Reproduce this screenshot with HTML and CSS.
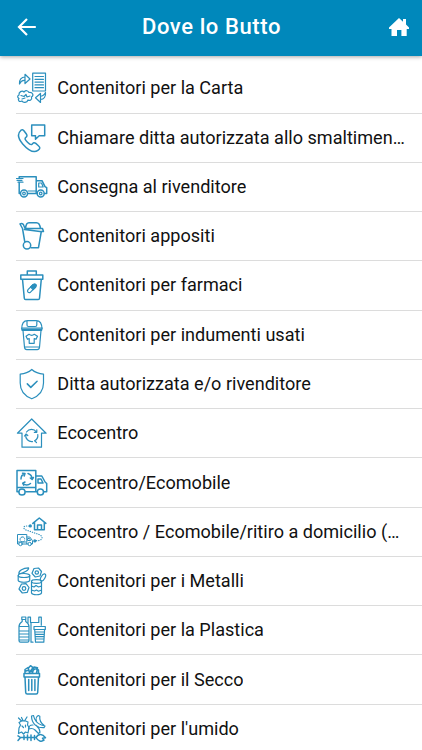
FILE: index.html
```html
<!DOCTYPE html>
<html lang="it">
<head>
<meta charset="utf-8">
<meta name="viewport" content="width=device-width, initial-scale=1">
<title>Dove lo Butto</title>
<link rel="stylesheet" href="styles.css">
</head>
<body>
<header class="bar">
  <svg class="back" viewBox="0 0 20 20"><path d="M18.800 10H2M10 2L2 10l8 8"/></svg>
  <h1 class="title">Dove lo Butto</h1>
  <svg class="home" viewBox="0 0 20 20"><path d="M10 1l4 3.800V2h3v5.600l3 2.900V12h-2.300v7h-5.300v-6H8v6H2.500v-7H0v-1.500z"/></svg>
</header>
<ul class="list">
  <li class="row">
    <svg class="icon" viewBox="0 0 32 32"><path d="M16.700 1.200h12.800v17.800H16.700zM19 4.500h8.500M19 7.300h8.500M19 10.100h8.500M19 12.900h8.500M19 15.700h8.500"/><path d="M3.500 12C3 7.500 5.500 5 9 5V2.300L14 7l-5 4.500V8.500C6.500 8 4.700 9.500 3.500 12zM9 5v3.500M29.500 20.500c.5 4-1.500 7-5 7v3l-5-4.700 5-4.300v2.700c2 0 3.700-1.200 5-3.700zM24.500 24v3.500"/><path d="M3 23c-.5-3 3-5 5-3 2-2 4-1.500 5 .5 4-.5 5 3 2.500 4.500 1 3-2 4-3.500 3-1 3-5 3-6 1-3 1.500-4.500-1-3-2.500-2-1-1.500-3 0-3.500zM5 23.500l3 1 2-2 1 2.500 3-1M6 27l3-1"/></svg>
    <span class="label">Contenitori per la Carta</span>
  </li>
  <li class="row">
    <svg class="icon" viewBox="0 0 32 32"><path class="bold" d="M15.700 3h13v10.800h-5.500l-3.700 3.400v-3.400h-3.800z"/><path class="bold" d="M5 8.200c-4 3.500-3 8.300 1.700 13.700 5.700 6.500 11 9.500 15.200 6.500 2.500-1.800 2.500-3 .5-4.700l-2.600-2.300c-1.600-1.300-2.700-.8-3.800.9-1 .9-2.500 0-4.500-2-2.300-2.400-3-3.700-1.800-4.800 1.500-1 1.600-2.200.5-3.700L7.900 8.700C7 7.500 6 7.400 5 8.200z"/></svg>
    <span class="label">Chiamare ditta autorizzata allo smaltimento</span>
  </li>
  <li class="row">
    <svg class="icon" viewBox="0 0 32 32"><path class="bold" d="M4.300 22.500H3.200V11.500M3.200 7V5.700h17v16.800h-8.600M20.200 9.700H26l3 6 1.700 1v5.800h-2.300M20.200 22.500h1"/><path d="M22.700 12h2.800l1.700 4h-4.500zM12 20h8M0.500 7.500h6.500M1 9.300h5M2 11.200h5"/><circle class="bold" cx="8" cy="22.500" r="3.500"/><circle class="bold" cx="24.700" cy="22.500" r="3.500"/><circle cx="8" cy="22.500" r="1.300"/><circle cx="24.700" cy="22.500" r="1.300"/></svg>
    <span class="label">Consegna al rivenditore</span>
  </li>
  <li class="row">
    <svg class="icon" viewBox="0 0 32 32"><path class="bold" d="M6.500 8.500L4 4q1.700-1 3.300.3L9 8.500h17.500l1 3H24L8.500 9.500M9.500 8.500C9.800 5 11 2.700 13 2.700h7.500c2 0 3.500 2.300 4 5.800M6.500 8.500L8.800 22M25.300 11.500L22.500 27.700H15"/><circle class="bold" cx="11" cy="25.300" r="3.700"/></svg>
    <span class="label">Contenitori appositi</span>
  </li>
  <li class="row">
    <svg class="icon" viewBox="0 0 32 32"><path class="bold" d="M11.300 5.800V2h9v3.800M4.800 6h22v4.300h-22zM6.500 10.300l1.800 19q.1 1.300 1.300 1.300h12.600q1.200 0 1.300-1.300l1.800-19"/><path d="M12 20.700l5.200-5.200q1.500-1 2.500 0 1 1.200 0 2.500l-5.200 5.200q-1.500 1-2.500 0-1-1.200 0-2.500z"/><path class="fill" d="M14.600 18l2.600-2.500q1.500-1 2.500 0 1 1.200 0 2.500l-2.600 2.600z"/></svg>
    <span class="label">Contenitori per farmaci</span>
  </li>
  <li class="row">
    <svg class="icon" viewBox="0 0 32 32"><path d="M5.700 10.300C5.700 5 8 1.700 11.500 1.700h8.700c3.500 0 5.800 3.300 5.800 8.600zM11 2v4q0 1.500 1.500 1.500h6.800q1.500 0 1.500-1.500V2M5.500 9h21M6 11.500h19.700M7 11.500l1.500 16.800q.2 2.300 2.300 2.300h10.400q2.100 0 2.300-2.300L25 11.500M8.500 28h15"/><path d="M13 15.300l-3 2 1.500 3 1.700-.8v4.800h5v-4.800l1.800.8 1.500-3-3.200-2q-2.500 2-5.300 0z"/></svg>
    <span class="label">Contenitori per indumenti usati</span>
  </li>
  <li class="row">
    <svg class="icon" viewBox="0 0 32 32"><path d="M15.800 1.500c3.300 3 7.200 4.300 11.700 4.600v9c0 7.500-4.200 12.900-11.700 15.700C8.300 28 4.200 22.600 4.200 15.100v-9C8.700 5.800 12.500 4.500 15.800 1.500z"/><path class="bold" d="M11.300 15.900l3.500 3.500 6.300-6.200"/></svg>
    <span class="label">Ditta autorizzata e/o rivenditore</span>
  </li>
  <li class="row">
    <svg class="icon" viewBox="0 0 32 32"><path d="M15.700 2L1.400 16.200H6v14h19.500v-14h4.600z"/><path d="M10.500 15a6.200 6.200 0 0 1 10 0M21.800 17.500a6.200 6.200 0 0 1-3.200 6.300M16.500 24.600a6.200 6.200 0 0 1-6.800-7M20.800 12.800v2.500h-2.500M20.800 22l-2.200 1.900 1.900 1.600M8.500 19l1.500-2 1.800 1.500"/></svg>
    <span class="label">Ecocentro</span>
  </li>
  <li class="row">
    <svg class="icon" viewBox="0 0 32 32"><path class="bold" d="M2.500 24.700H1V3.500h18.800v21.200h-10M19.800 9h6l3.300 6 1.600 1.500v8.200h-2.500M19.800 24.700h1M22 12h3l2 4h-5zM1 20.500h18.800"/><circle class="bold" cx="6" cy="25" r="3.100"/><circle class="bold" cx="24.400" cy="25" r="3.100"/><path class="bold" d="M5 12a5.700 5.700 0 0 1 3.500-5.300M12 6.500a5.700 5.700 0 0 1 4 5.500M14.500 16.500a5.700 5.700 0 0 1-7.500 0M6.500 6.200l2.500.3-.8 2.500M14.300 11l1.800 1.500 1.300-2M9 15l-2.300 1.200 1 2"/></svg>
    <span class="label">Ecocentro/Ecomobile</span>
  </li>
  <li class="row">
    <svg class="icon" viewBox="0 0 32 32"><path class="bold" d="M16.800 7.400L23.300 2l6.600 5.400M18.500 6.300v7.500h9.800V6.300M21.500 13.800V9H25.500v4.800"/><path class="thin" d="M2.500 28H1.500v-9.500h9.300V28H6.500M10.800 21h3l2.700 3.700V28h-1M10.800 28h.8M12 22.500h1.500l1.200 2H12zM4 23.500c0-3.500 4.700-3.500 4.700-.5M8.500 25c-1.500 1.500-3 1.300-4-.2M2 26h8"/><circle class="thin" cx="4.500" cy="28" r="1.700"/><circle class="thin" cx="13.700" cy="28" r="1.700"/><path class="dots" d="M13 10H10c-3 .2-3 2.700 0 4l13 4.500c4 1.500 4.300 5-.5 6.200H19"/><circle class="fill" cx="14.300" cy="9.900" r="1"/><circle class="fill" cx="18.800" cy="24.900" r="1"/></svg>
    <span class="label">Ecocentro / Ecomobile/ritiro a domicilio (su prenotazione)</span>
  </li>
  <li class="row">
    <svg class="icon" viewBox="0 0 32 32"><path d="M2.200 10.500v5c1 2.300 10.500 2.300 11.500 0v-5M3 9C2 5.500 7.500 3 12.500 2.800 13.500 5 8 8 3 9z"/><ellipse cx="8" cy="10.500" rx="5.800" ry="2"/><path d="M18 3.500l4.500-.5 3 3.500-1.500 4.500-4.700 1-3.300-3.700zM5.500 19l4.500-.3 3 3.800-1.700 4.800-5 .7L3 24z"/><circle cx="20.800" cy="7.500" r="1.700"/><circle cx="8" cy="23.500" r="1.800"/><ellipse cx="20.500" cy="16.500" rx="5" ry="1.800"/><path d="M15.500 16.500V28c1 2.300 9 2.300 10 0V16.500M15.500 21l2.500 1 2-1.500 2.500 1.500 3-1M15.500 25l3 1 2-1 2 1.200 3-1.200"/><ellipse cx="27" cy="12.500" rx="1.900" ry="4" transform="rotate(30 27 12.500)"/></svg>
    <span class="label">Contenitori per i Metalli</span>
  </li>
  <li class="row">
    <svg class="icon" viewBox="0 0 32 32"><path d="M5.800 3h4v2.500h-4zM6.200 5.500v2C4 9 3 10.500 3 12.500v14q0 1.700 1.500 1.700h7q1.500 0 1.500-1.700v-14c0-2-1-3.500-3.300-5v-2M3 12.500h10M3 17h10M3 20h10M3 23h10M3 26h10"/><path d="M12 8.500V3.200h2.500v5.300h8.300V3.200h2.500v8M15 12v16.200h2M15 12V8.500"/><path d="M18 12.500h11.300v3H18zM18.700 15.500l.8 12.700h8.300l.8-12.700M19 18h9.500M19 20.300h9.300M19.300 22.600H28M19.300 25H28"/></svg>
    <span class="label">Contenitori per la Plastica</span>
  </li>
  <li class="row">
    <svg class="icon" viewBox="0 0 32 32"><path class="bold" d="M8 9.500h15.500V13H8zM9 13l.7 15.500q.1 1.500 1.500 1.500h9q1.400 0 1.500-1.500L22.500 13M12.700 15.500v11M15.800 15.500v11M18.900 15.500v11"/><path class="bold" d="M9 9V5.500l3-2 1.500 5M12.500 4l2-2.300 2.500 2-3.500 4.500M16.500 9l1.500-6 3.500.8-1 5.200M15 8l4-3M10 7l3-1M20 5l2.500 1v3"/></svg>
    <span class="label">Contenitori per il Secco</span>
  </li>
  <li class="row">
    <svg class="icon" viewBox="0 0 32 32"><path d="M2.500 5l3 3M5.500 4.500l1.500 3M11 4L8.500 8M3 9.500l3-1.700h3l3 1.200-.5 3 1.500 2.500-1 5.500-2.500-1-2 2-2-2-3 1.500.5-5.500L4.500 12zM6 13l1.500 1.500M9.500 12v2"/><path d="M15.500 3l2-.5c1 5 3.500 8 8 9.500l3.500 1-1 1.700c-7.500.3-12.300-4-12.500-11.700zM20.500 8c-1-2 0-4.500 1.800-5.500l1.500.7c-.5 4 .7 6.500 4.200 9M17 12c-3-.2-4.300 1.300-4.500 4 3-1 5-.5 6.500 1l3.500 3.500 1.500-1.300c-.3-3-1.500-5-4-7"/><path class="bold" d="M2 22.800l2.500 1.700H20M2 27.500l2.500-3M8 22.500v4M11.500 22v5M15 22v5.500M18.500 22.500v4M20 24.500c2.500-4.200 6.500-4 9.500.3l-3 .4 1.500 2c-2.500 1.800-6 1-8-2.700z"/></svg>
    <span class="label">Contenitori per l'umido</span>
  </li>
</ul>
</body>
</html>
```
FILE: styles.css
```css
* { box-sizing: border-box; }
body {
  margin: 0;
  height: 750px;
  overflow: hidden;
  display: flex;
  flex-direction: column;
  background: #fff;
  color: #111;
  font-family: Roboto, sans-serif;
}
.bar {
  flex: none;
  display: flex;
  align-items: center;
  justify-content: space-between;
  height: 56px;
  padding: 0 13px 3px 17px;
  background: #0088bb;
  box-shadow: 0 1px 4px rgba(0, 0, 0, .35);
}
.title {
  margin: 0 3px 0 0;
  color: #fff;
  font-size: 22px;
  font-weight: 500;
  letter-spacing: .6px;
}
.back, .home { width: 20px; height: 20px; }
.back { fill: none; stroke: #fff; stroke-width: 2.200; }
.home { fill: #fff; }
.list {
  flex: none;
  margin: 0;
  padding: 8.300px 0 0 16px;
  list-style: none;
}
.row {
  display: flex;
  align-items: center;
  gap: 9.300px;
  height: 49.270px;
  padding-right: 16px;
  border-bottom: 1px solid #dcdcdc;
}
.icon {
  flex: none;
  width: 32px;
  height: 32px;
  fill: none;
  stroke: #2b8fbd;
  stroke-width: 1.200;
  stroke-linejoin: round;
  stroke-linecap: round;
}
.icon .bold { stroke-width: 1.500; }
.icon .thin { stroke-width: 1; }
.icon .fill { fill: #2b8fbd; }
.icon .dots { stroke-width: 1.200; stroke-dasharray: .3 2; }
.label {
  min-width: 0;
  overflow: hidden;
  text-overflow: ellipsis;
  white-space: nowrap;
  font-size: 18.080px;
  line-height: 24px;
}
```
